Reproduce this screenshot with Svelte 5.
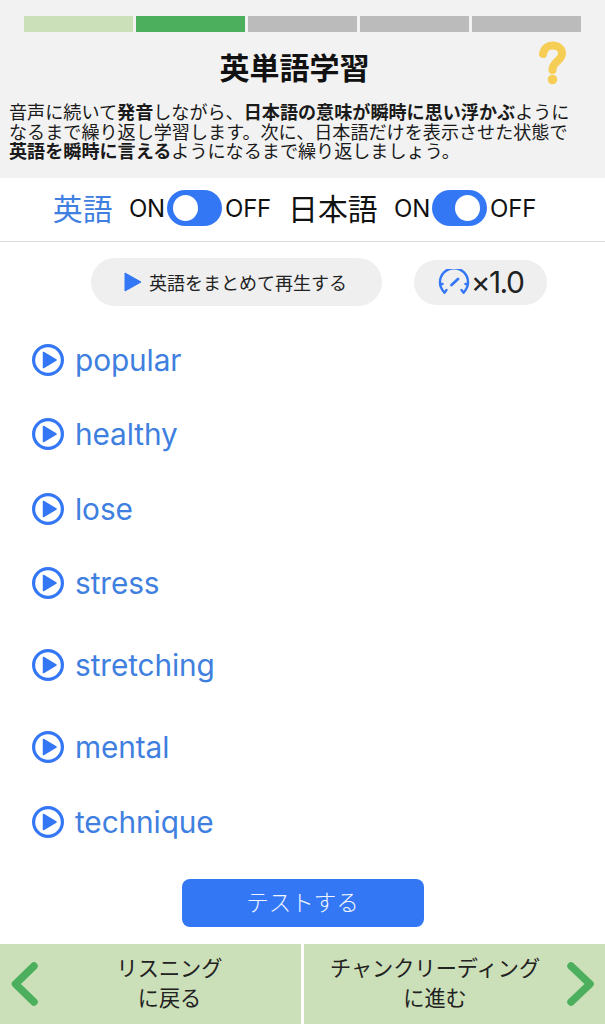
<script lang="ts">
	const steps = ['done', 'current', 'todo', 'todo', 'todo'];

	const words = [
		{ text: 'popular' },
		{ text: 'healthy' },
		{ text: 'lose' },
		{ text: 'stress' },
		{ text: 'stretching', tall: true },
		{ text: 'mental' },
		{ text: 'technique' }
	];

	const toggles = [
		{ label: '英語', active: true, on: false },
		{ label: '日本語', active: false, on: true }
	];
</script>

<div class="page">
	<header class="intro">
		<div class="progress">
			{#each steps as step}
				<span class={step}></span>
			{/each}
		</div>
		<div class="title-row">
			<h1>英単語学習</h1>
			<svg class="help" width="28" height="44" viewBox="0 0 28 44" role="img" aria-label="ヘルプ">
				<path d="M5 13 C6 7 10 4.5 14.5 4.5 C20 4.5 24 8 24 12.5 C24 20 14.5 20 14.5 29" fill="none" stroke="#f6cd55" stroke-width="8" stroke-linecap="round" />
				<circle cx="14.5" cy="38.5" r="4.8" fill="#f6cd55" />
			</svg>
		</div>
		<p>
			音声に続いて<b>発音</b>しながら、<b>日本語の意味が瞬時に思い浮かぶ</b>ように<br />なるまで繰り返し学習します。次に、日本語だけを表示させた状態で<br /><b>英語を瞬時に言える</b>ようになるまで繰り返しましょう。
		</p>
	</header>

	<div class="toggles">
		{#each toggles as toggle}
			<div class="toggle-group">
				<span class="lang" class:active={toggle.active}>{toggle.label}</span>
				<span class="state on">ON</span>
				<span class="switch" class:right={toggle.on}><i></i></span>
				<span class="state">OFF</span>
			</div>
		{/each}
	</div>

	<div class="controls">
		<button type="button" class="play-all">
			<svg width="18" height="20" viewBox="0 0 18 20" aria-hidden="true">
				<path d="M1 1 L17 10 L1 19 Z" fill="#3477f5" stroke="#3477f5" stroke-linejoin="round" />
			</svg>
			英語をまとめて再生する
		</button>
		<button type="button" class="speed">
			<svg width="32" height="26" viewBox="0 0 32 26" fill="none" stroke="#3477f5" stroke-width="2.4" stroke-linecap="round" aria-hidden="true">
				<path d="M6.5 23.5 A14 14 0 1 1 25.5 23.5" />
				<path d="M13.5 16 L20 10" stroke-width="2.8" />
				<path d="M6.5 23.5 L8.5 21 M25.5 23.5 L23.5 21 M2 15 H4.5 M30 15 H27.5" />
			</svg>
			<span>×1.0</span>
		</button>
	</div>

	<ul class="words">
		{#each words as word}
			<li class:tall={word.tall}>
				<svg width="32" height="32" viewBox="0 0 32 32" aria-hidden="true">
					<circle cx="16" cy="16" r="14.4" fill="none" stroke="#3477f5" stroke-width="3.2" />
					<path d="M11.5 8.5 L24 16 L11.5 23.5 Z" fill="#3477f5" stroke="#3477f5" stroke-width="1.5" stroke-linejoin="round" />
				</svg>
				<span>{word.text}</span>
			</li>
		{/each}
	</ul>

	<div class="test-wrap">
		<button type="button" class="test">テストする</button>
	</div>

	<nav class="footer">
		<a href="#back" class="nav-link">
			<svg class="chevron" width="30" height="46" viewBox="0 0 30 46" aria-hidden="true">
				<path d="M26 5 L7.5 23 L26 41" fill="none" stroke="#4caf5d" stroke-width="7.5" stroke-linecap="round" stroke-linejoin="round" />
			</svg>
			<span>リスニング<br />に戻る</span>
		</a>
		<a href="#next" class="nav-link next">
			<span>チャンクリーディング<br />に進む</span>
			<svg class="chevron" width="30" height="46" viewBox="0 0 30 46" aria-hidden="true">
				<path d="M5 5 L24 23 L5 41" fill="none" stroke="#4caf5d" stroke-width="7.5" stroke-linecap="round" stroke-linejoin="round" />
			</svg>
		</a>
	</nav>
</div>

<style>
	:global(body) {
		background: #fff;
	}

	.page {
		width: 605px;
		height: 1024px;
		overflow: hidden;
		display: flex;
		flex-direction: column;
		font-family: Inter, 'Noto Sans CJK JP', sans-serif;
		color: #111;
	}

	.intro {
		height: 178px;
		box-sizing: border-box;
		padding-top: 16px;
		background: #f2f2f2;
	}

	.progress {
		display: flex;
		gap: 3px;
		padding: 0 24px;
	}

	.progress span {
		flex: 1;
		height: 16px;
		background: #bbb;
	}

	.progress .done {
		background: #cbdfb8;
	}

	.progress .current {
		background: #4caf5d;
	}

	.title-row {
		position: relative;
		height: 70px;
		display: flex;
		align-items: center;
		justify-content: center;
	}

	h1 {
		margin: -2px 16px 0 0;
		font-family: 'Noto Sans CJK JP', sans-serif;
		font-size: 30px;
		font-weight: 700;
		line-height: 40px;
	}

	.help {
		position: absolute;
		left: 538px;
		top: 9px;
	}

	.intro p {
		margin: 0;
		padding-left: 9px;
		font-family: 'Noto Sans CJK JP', sans-serif;
		font-size: 18.1px;
		line-height: 19.6px;
		white-space: nowrap;
		color: #1a1a1a;
	}

	.toggles {
		height: 64px;
		box-sizing: border-box;
		display: flex;
		justify-content: center;
		align-items: center;
		gap: 17px;
		padding: 0 16px 4px 0;
		border-bottom: 1px solid #dcdcdc;
	}

	.toggle-group {
		display: flex;
		align-items: center;
	}

	.lang {
		font-family: 'Noto Sans CJK JP', sans-serif;
		font-size: 29.8px;
		margin-right: 16.5px;
		margin-top: -2px;
	}

	.lang.active {
		color: #3f7fe0;
	}

	.state {
		font-size: 24px;
		letter-spacing: -0.2px;
		margin-top: 2px;
	}

	.state.on {
		margin-right: 2px;
	}

	.switch {
		width: 55px;
		height: 36px;
		margin-right: 3px;
		border-radius: 18px;
		background: #3477f5;
		position: relative;
	}

	.switch i {
		position: absolute;
		left: 6px;
		top: 5px;
		width: 25px;
		height: 26px;
		border-radius: 50%;
		background: #fff;
	}

	.switch.right i {
		left: 23px;
	}

	.controls {
		display: flex;
		align-items: center;
		padding: 16px 0 0 91px;
		gap: 32px;
	}

	.controls button {
		border: 0;
		background: #efefef;
		display: flex;
		align-items: center;
		justify-content: center;
		font-family: inherit;
		color: #222;
	}

	.play-all {
		width: 291px;
		height: 48px;
		border-radius: 24px;
		gap: 7px;
		font-size: 18px;
		padding-right: 8px;
	}

	.speed {
		width: 133px;
		height: 45px;
		border-radius: 23px;
		gap: 1px;
		font-size: 30px;
		letter-spacing: -1.6px;
		padding: 0;
	}

	.words {
		list-style: none;
		margin: 17px 0 0;
		padding: 0 0 0 32px;
	}

	.words li {
		height: 74.3px;
		display: flex;
		align-items: center;
		gap: 11px;
		font-size: 29.8px;
		letter-spacing: -0.1px;
		color: #3f7fe0;
	}

	.words li.tall {
		height: 90px;
	}

	.test-wrap {
		display: flex;
		justify-content: center;
		margin-top: 20px;
	}

	.test {
		width: 242px;
		height: 48px;
		border: 0;
		border-radius: 8px;
		padding: 0 0 4px;
		background: #3477f5;
		color: #f2f6ff;
		font-family: 'Noto Sans CJK JP', sans-serif;
		font-size: 22.5px;
		font-weight: 300;
	}

	.footer {
		margin-top: auto;
		height: 80px;
		display: flex;
		gap: 3px;
		background: #fff;
	}

	.nav-link {
		flex: 1;
		min-width: 0;
		display: flex;
		align-items: center;
		background: #cbdfb8;
		color: #222;
		text-decoration: none;
		font-family: 'Noto Sans CJK JP', sans-serif;
		font-size: 21.2px;
		line-height: 30px;
		text-align: center;
	}

	.nav-link span {
		flex: 1;
		margin-top: -4px;
	}

	.chevron {
		flex: none;
		margin-left: 8px;
	}

	.nav-link.next .chevron {
		margin: 0 9px 0 0;
	}
</style>
